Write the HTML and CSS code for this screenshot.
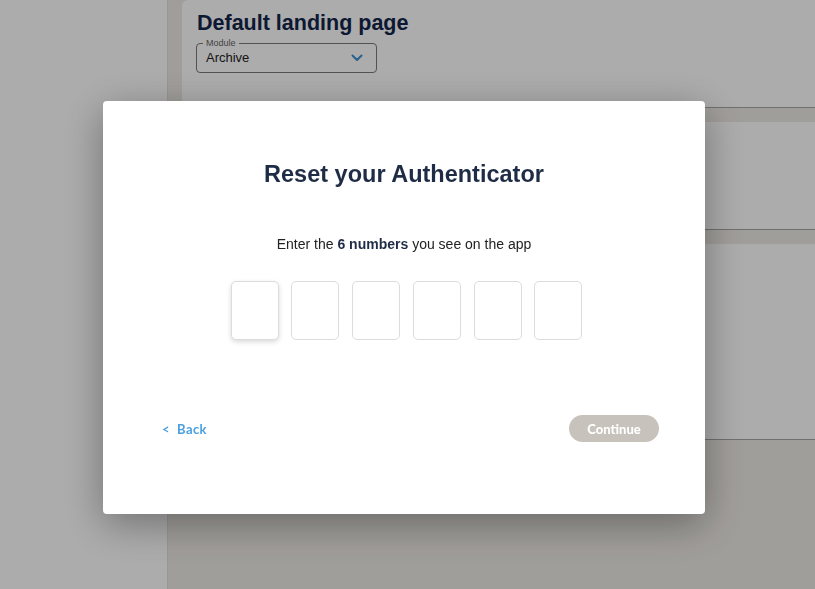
FILE: index.html
```html
<!DOCTYPE html>
<html lang="en">
<head>
    <meta charset="UTF-8">
    <meta name="viewport" content="width=device-width, initial-scale=1.0">
    <title>Reset your Authenticator</title>
    <link rel="stylesheet" href="styles.css">
</head>
<body>
    <div class="app">
        <aside class="sidebar"></aside>
        <main class="content">
            <section class="card card-top">
                <h1 class="page-title">Default landing page</h1>
                <div class="select-box">
                    <span class="select-label">Module</span>
                    <span class="select-value">Archive</span>
                    <svg class="chevron" width="12" height="8" viewBox="0 0 12 8">
                        <path d="M1.5 1.5 L6 6 L10.5 1.5" fill="none" stroke="#3b8fd0" stroke-width="2" stroke-linecap="round" stroke-linejoin="round"/>
                    </svg>
                </div>
            </section>
            <section class="card card-mid"></section>
            <section class="card card-low"></section>
        </main>
    </div>

    <div class="overlay">
        <div class="modal">
            <h2 class="modal-title">Reset your Authenticator</h2>
            <p class="modal-text">Enter the <b>6 numbers</b> you see on the app</p>
            <div class="code-row">
                <input class="code-box active" maxlength="1">
                <input class="code-box" maxlength="1">
                <input class="code-box" maxlength="1">
                <input class="code-box" maxlength="1">
                <input class="code-box" maxlength="1">
                <input class="code-box" maxlength="1">
            </div>
            <div class="modal-actions">
                <a class="back-link" href="#">&lt;&nbsp; Back</a>
                <button class="continue-btn" disabled>Continue</button>
            </div>
        </div>
    </div>
</body>
</html>
```

FILE: styles.css
```css
* {
    box-sizing: border-box;
}
body {
    margin: 0;
    height: 589px;
    overflow: hidden;
    font-family: "Liberation Sans", Arial, sans-serif;
    background: #eeeae5;
}
.app {
    display: flex;
    height: 100%;
}
.sidebar {
    width: 168px;
    flex-shrink: 0;
    background: #fff;
    border-right: 1px solid #e0e0e0;
}
.content {
    flex: 1;
    padding-left: 14px;
    display: flex;
    flex-direction: column;
    gap: 14px;
}
.card {
    background: #fff;
    border-bottom: 1px solid #a6a6a6;
    border-radius: 6px 0 0 0;
}
.card-top {
    height: 108px;
    padding: 11px 0 0 14px;
}
.card-mid {
    height: 108px;
    border-radius: 0;
}
.card-low {
    height: 196px;
    border-radius: 0;
}
.page-title {
    margin: 0 0 7px 1px;
    font-size: 21.5px;
    line-height: 25px;
    font-weight: bold;
    color: #14264a;
}
.select-box {
    position: relative;
    width: 181px;
    height: 30px;
    border: 1px solid #7a7a7a;
    border-radius: 4px;
    padding: 4px 0 0 9px;
}
.select-label {
    position: absolute;
    top: -6px;
    left: 6px;
    padding: 0 3px;
    background: #fff;
    font-size: 9px;
    color: #666;
}
.select-value {
    font-size: 13px;
    color: #222;
}
.chevron {
    position: absolute;
    right: 13px;
    top: 10px;
}
.overlay {
    position: fixed;
    inset: 0;
    background: rgba(0, 0, 0, 0.325);
    padding: 101px 0 0 103px;
}
.modal {
    width: 602px;
    height: 413px;
    background: #fff;
    border-radius: 4px;
    box-shadow: 0 10px 40px rgba(0, 0, 0, 0.35);
    display: flex;
    flex-direction: column;
    align-items: center;
    padding-top: 58px;
}
.modal-title {
    margin: 0;
    font-size: 23.5px;
    font-weight: bold;
    color: #1f2c45;
    line-height: 30px;
}
.modal-text {
    margin: 46px 0 0;
    font-size: 14px;
    color: #222;
    line-height: 18px;
}
.modal-text b {
    color: #1f2c45;
}
.code-row {
    display: flex;
    gap: 12.8px;
    margin: 28px 0 0 5px;
}
.code-box {
    width: 48px;
    height: 59px;
    border: 1px solid #dcdcdc;
    border-radius: 5px;
    background: #fff;
    outline: none;
}
.code-box.active {
    box-shadow: 0 2px 5px rgba(0, 0, 0, 0.15);
}
.modal-actions {
    align-self: stretch;
    display: flex;
    justify-content: space-between;
    align-items: center;
    margin-top: 75px;
    padding: 0 46px 0 59px;
}
.back-link {
    font-family: Lato, sans-serif;
    font-size: 13px;
    font-weight: bold;
    color: #4a9fe0;
    text-decoration: none;
    letter-spacing: 0.4px;
}
.continue-btn {
    width: 90px;
    height: 27px;
    border: none;
    border-radius: 14px;
    background: #c8c2bc;
    color: #fff;
    font-family: Lato, sans-serif;
    font-size: 13px;
    font-weight: 900;
}
```
